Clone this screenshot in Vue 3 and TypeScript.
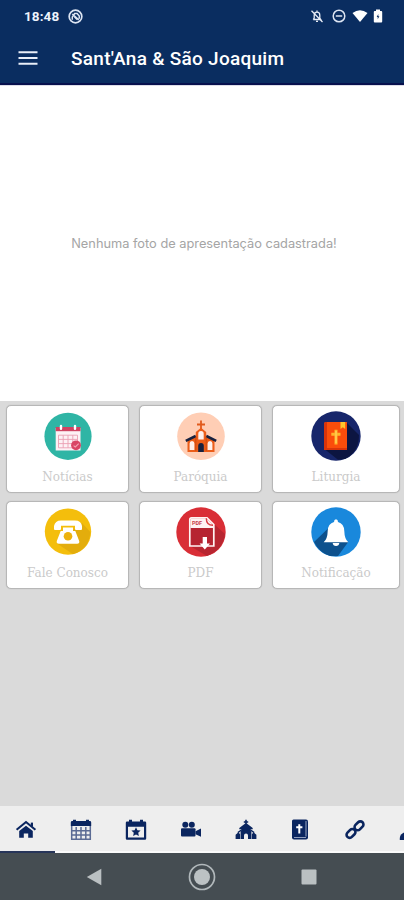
<script setup lang="ts">
interface Shortcut {
  id: string
  label: string
}

const shortcuts: Shortcut[] = [
  { id: 'news', label: 'Notícias' },
  { id: 'parish', label: 'Paróquia' },
  { id: 'liturgy', label: 'Liturgia' },
  { id: 'contact', label: 'Fale Conosco' },
  { id: 'pdf', label: 'PDF' },
  { id: 'notify', label: 'Notificação' },
]

const tabs: string[] = ['home', 'calendar', 'event', 'video', 'church', 'bible', 'link', 'person']
</script>

<template>
  <div class="screen">
    <header class="top">
      <div class="status">
        <span class="clock">18:48</span>
        <svg class="sync" width="15" height="15" viewBox="0 0 14 14" fill="none" stroke="#dce4f2">
          <circle cx="7" cy="7" r="5.9" stroke-width="1.6" />
          <path d="M4 10V7.5L6.2 4.2H8.5L10.5 6.5V9M4 4.8L10 10.2M6 7.3L8.4 9.8" stroke-width="1.4" />
        </svg>
        <div class="status-right">
          <svg width="14" height="14" viewBox="0 0 14 14" fill="none" stroke="#e8edf6" stroke-width="1.3">
            <path d="M3.2 10.5H10.8L9.8 9V6.2C9.8 4.4 8.6 3.2 7 3.2S4.2 4.4 4.2 6.2V9L3.2 10.5M7 1.5V3M6 12.3H8M1.5 1.8L12.5 13" />
          </svg>
          <svg width="14" height="14" viewBox="0 0 14 14" fill="none" stroke="#dce4f2" stroke-width="1.5">
            <circle cx="7" cy="7" r="5.8" /><path d="M3.8 7H10.2" />
          </svg>
          <svg class="wifi" width="16" height="14" viewBox="0 0 16 14" fill="#fff"><path d="M.5 4Q8-1.6 15.5 4L8 13Z" /></svg>
          <svg width="10" height="14" viewBox="0 0 10 14">
            <path d="M3 .5H7V2H8.3Q9.2 2 9.2 3V12.5Q9.2 13.5 8.3 13.5H1.7Q.8 13.5 .8 12.5V3Q.8 2 1.7 2H3Z" fill="#fff" />
            <path d="M5.3 5L3.7 8.1H4.7V10.3L6.4 7.2H5.3Z" fill="#0a2d60" />
          </svg>
        </div>
      </div>
      <div class="bar">
        <svg class="menu" width="20" height="14" viewBox="0 0 20 14" stroke="#e9eef8" stroke-width="1.9"><path d="M.5 1.3H19.5M.5 7H19.5M.5 12.7H19.5" /></svg>
        <h1>Sant'Ana &amp; São Joaquim</h1>
      </div>
    </header>

    <section class="hero"><p>Nenhuma foto de apresentação cadastrada!</p></section>

    <main class="body">
      <div class="grid">
        <button v-for="s in shortcuts" :key="s.id" class="card">
          <svg v-if="s.id === 'news'" width="50" height="50" viewBox="0 0 50 50">
            <circle cx="25" cy="25.3" r="23.6" fill="#2fb5a5" />
            <path d="M12.7 17H37.5V39.5H12.7Z" fill="#fdf1f5" />
            <path d="M12.7 16H37.5V20.2H12.7Z" fill="#cf4362" />
            <path d="M18 15V17.8M32 15V17.8" stroke="#fff" stroke-width="2.4" stroke-linecap="round" />
            <path d="M15.5 24.2H34.5V36.8H15.5ZM15.5 28.4H34.5M15.5 32.6H34.5M20.2 24.2V36.8M25 24.2V36.8M29.8 24.2V36.8" fill="none" stroke="#eb9fb3" stroke-width=".9" />
            <circle cx="33" cy="34.3" r="4.9" fill="#d94565" />
            <path d="M30.6 34.6L32.3 36L35.7 32.6" fill="none" stroke="#f2a2b3" stroke-width="1.1" />
          </svg>
          <svg v-else-if="s.id === 'parish'" width="50" height="50" viewBox="0 0 50 50">
            <circle cx="25" cy="25.3" r="23.8" fill="#ffceb5" />
            <path d="M25 9.5V20M21 13.5H29" stroke="#e15b1d" stroke-width="1.8" />
            <path d="M11.5 29L19.8 25V21L25 16.8L30.2 21V25L38.5 29V41H11.5Z" fill="#ec5d19" />
            <path d="M9.8 29.8L19.7 25M30.3 25L40.2 29.8" stroke="#17213f" stroke-width="2.6" />
            <path d="M22.3 28.5V22.8Q22.3 20 25 20T27.7 22.8V28.5ZM13.6 39V32.5Q13.6 30 16 30T18.4 32.5V39ZM31.6 39V32.5Q31.6 30 34 30T36.4 32.5V39Z" fill="#fff1ec" />
            <path d="M22.2 41V35Q22.2 32 25 32T27.8 35V41Z" fill="#17213f" />
            <path d="M19.8 25.5V40M30.2 25.5V40" stroke="#bd4513" stroke-width=".7" />
          </svg>
          <svg v-else-if="s.id === 'liturgy'" width="50" height="50" viewBox="0 0 50 50">
            <circle cx="25" cy="25" r="24.7" fill="#17266b" />
            <path d="M35.5 11.5L48 24Q48 41 34 48L27 48.8L14 38.5Z" fill="#0c1541" />
            <path d="M15 11H36V39H13V13Q13 11 15 11Z" fill="#fb4d0b" />
            <path d="M13 13Q13 11 15 11H16V37H36V39H13Z" fill="#d9340b" />
            <path d="M29.5 11H34.2V18L31.8 16.3L29.5 18Z" fill="#ffc52c" />
            <path d="M25 18.7V33.5M20.3 23.3H29.5" stroke="#ffb62c" stroke-width="3" />
            <path d="M25 20V32" stroke="#ffda69" stroke-width="1" />
          </svg>
          <svg v-else-if="s.id === 'contact'" width="50" height="50" viewBox="0 0 50 50">
            <circle cx="25" cy="24.6" r="23.2" fill="#f4be0c" />
            <path d="M39 16L47.3 25Q46.3 42 30 47.2L14 36.5Z" fill="#e3ad0c" />
            <path d="M11 22V19Q12 13.4 18 13.4H32Q38.3 13.4 39 19V22Q39 23 38 23H33Q32 23 32 22V18.8H18V22Q18 23 17 23H12Q11 23 11 22Z" fill="#fff" />
            <path d="M20 20.5H30V24H32.3L36.2 34Q36.8 36.8 34.2 36.8H15.8Q13.2 36.8 13.8 34L17.7 24H20Z" fill="#fff" />
            <circle cx="25" cy="29.3" r="4.3" fill="#edb20d" />
          </svg>
          <svg v-else-if="s.id === 'pdf'" width="50" height="50" viewBox="0 0 50 50">
            <circle cx="25" cy="25" r="24.7" fill="#d92e36" />
            <path d="M38 17L49 27Q47 43 31 49L14 39Z" fill="#b82631" />
            <path d="M15.5 10.8H31L37.8 17.7V39H13.8V12.5Q13.8 10.8 15.5 10.8Z" fill="#b62431" stroke="#fff4f3" stroke-width="1.7" />
            <path d="M14.5 11.5H30.5L37 18V21H14.5Z" fill="#fff3f3" />
            <path d="M30.3 11.2Q30.3 18.3 37 18.3" fill="none" stroke="#d93b43" stroke-width="1.4" />
            <text x="16" y="17.6" class="pdf-text">PDF</text>
            <path d="M26.7 30H31V36.5H34L28.8 42.5L23.6 36.5H26.7Z" fill="#fff" />
          </svg>
          <svg v-else width="50" height="50" viewBox="0 0 50 50">
            <circle cx="25" cy="25" r="24.7" fill="#1988dc" />
            <path d="M17.5 21L3 35Q8.5 46 19 49L27 49L37.2 35Z" fill="#0d518d" />
            <path d="M25 12.3Q27 12.3 27 15Q33 16.5 33.3 24Q33.5 32 37.3 35.3H12.7Q16.5 32 16.7 24Q17 16.5 23 15Q23 12.3 25 12.3Z" fill="#fff" />
            <path d="M21.7 36H28.3Q28 39 25 39T21.7 36Z" fill="#fff" />
          </svg>
          <span class="label">{{ s.label }}</span>
        </button>
      </div>
    </main>

    <nav class="tabs">
      <div v-for="t in tabs" :key="t" :class="['tab', { active: t === 'home' }]">
        <svg width="22" height="22" viewBox="0 0 22 22" fill="#0a255f">
          <g v-if="t === 'home'">
            <path d="M4.2 12L11 6.8L17.8 12V18.8H13.2V14.5H8.8V18.8H4.2Z" />
            <path d="M1.6 10.8L11 3L20.4 10.8" fill="none" stroke="#0a255f" stroke-width="2.1" />
            <path d="M15.8 3.6H18V7.5H15.8Z" />
          </g>
          <g v-else-if="t === 'calendar'">
            <path d="M.8 3.4Q.8 2 2.2 2H3V.8H6V2H16V.8H19V2H19.8Q21.2 2 21.2 3.4V7H.8Z" />
            <path d="M1.7 7V20.3H20.3V7M1.7 11.8H20.3M1.7 16H20.3M6.2 8V20.3M11 8V20.3M15.8 8V20.3" fill="none" stroke="#5b6b94" stroke-width="1.5" />
          </g>
          <g v-else-if="t === 'event'">
            <path fill-rule="evenodd" d="M2 2.5H4V.8H7V2.5H15V.8H18V2.5H20Q21.2 2.5 21.2 3.8V19.5Q21.2 20.8 20 20.8H2Q.8 20.8 .8 19.5V3.8Q.8 2.5 2 2.5ZM3 7.8V18.5H19V7.8Z" />
            <path d="M11 8.2L12.4 11.3L15.6 11.6L13.2 13.8L13.9 17.1L11 15.4L8.1 17.1L8.8 13.8L6.4 11.6L9.6 11.3Z" />
          </g>
          <g v-else-if="t === 'video'">
            <circle cx="5.3" cy="5.8" r="3" /><circle cx="11.8" cy="5.8" r="3" />
            <rect x="1" y="9.2" width="14.5" height="8.3" rx="1" /><path d="M15.5 12.3L21 9.5V17.7L15.5 15.2Z" />
          </g>
          <g v-else-if="t === 'church'">
            <path d="M10.2 .8H11.8V2.3H13.2V3.7H11.8V4.5L17.7 9V10.2H4.3V9L10.2 4.5V3.7H8.8V2.3H10.2Z" />
            <path d="M5.6 13L7.5 9.8H14.5L16.4 13V20H13V16.5Q13 14.5 11 14.5T9 16.5V20H5.6Z" />
            <path d="M.6 15.8L3.2 13.5L5.1 15V20H.6ZM16.9 15L18.8 13.5L21.4 15.8V20H16.9Z" />
            <path d="M2.8 13.6L7 10.7H15L19.2 13.6" fill="none" stroke="#0a255f" stroke-width="1.3" />
          </g>
          <g v-else-if="t === 'bible'">
            <path d="M4.5 .6H17Q19 .6 19 2.6V18.6Q19 20.6 17 20.6H5Q3 20.6 3 18.6V2.1Q3 .6 4.5 .6Z" />
            <path d="M17 2V17.5M5 18.5H17" stroke="#8f9dbb" stroke-width="1.1" />
            <path d="M10.3 5.3V14.4M7.2 8.2H13.4" stroke="#fff" stroke-width="2" />
          </g>
          <g v-else-if="t === 'link'" fill="none" stroke="#0a255f" stroke-width="2.6">
            <rect x="-5" y="-3.1" width="10" height="6.2" rx="3.1" transform="translate(7 14.4) rotate(-45)" />
            <rect x="-5" y="-3.1" width="10" height="6.2" rx="3.1" transform="translate(15 6.8) rotate(-45)" />
          </g>
          <g v-else><circle cx="11" cy="6.5" r="4" /><path d="M.8 21V19Q1.5 14 7 13H15Q20.5 14 21.2 19V21Z" /></g>
        </svg>
      </div>
    </nav>

    <footer class="system">
      <svg width="16" height="18" viewBox="0 0 16 18"><path d="M.8 9L15.3 .8V17.2Z" fill="#bac0c2" /></svg>
      <svg width="28" height="28" viewBox="0 0 28 28"><circle cx="14" cy="14" r="12.5" fill="none" stroke="#b1b8bb" stroke-width="1.7" /><circle cx="14" cy="14" r="8" fill="#bcc2c4" /></svg>
      <svg width="16" height="16" viewBox="0 0 16 16"><rect x=".5" y=".5" width="15" height="15" rx="1" fill="#bac0c2" /></svg>
    </footer>
  </div>
</template>

<style>
body { margin: 0; }
</style>

<style scoped>
.screen { width: 404px; height: 900px; display: flex; flex-direction: column; overflow: hidden; background: #dadada; font-family: Roboto, sans-serif; }
.top { box-sizing: border-box; height: 85px; flex: none; background: #0a2d60; border-bottom: 2px solid #07104d; color: #fff; }
.status { height: 32px; display: flex; align-items: center; padding: 0 21px 0 24px; }
.clock { width: 44px; font-size: 13.5px; font-weight: 700; letter-spacing: .1px; color: #eef3fc; }
.status-right { margin-left: auto; display: flex; align-items: center; gap: 8px; }
.wifi { margin: 0 -3px 0 -2px; }
.bar { height: 51px; display: flex; align-items: center; padding-left: 18px; }
.menu { margin-right: 33px; }
h1 { margin: 2px 0 0; font-size: 19px; line-height: 24px; font-weight: 500; letter-spacing: .28px; white-space: nowrap; }
.hero { box-sizing: border-box; height: 316px; flex: none; display: flex; align-items: center; justify-content: center; background: #fff; border-top: 1px solid #dddde8; }
.hero p { margin: 0 0 0 4px; font-family: Inter, sans-serif; font-size: 12.8px; color: #a5a5a5; white-space: nowrap; }
.body { flex: 1; padding: 4px 4px 0 6px; }
.grid { display: grid; grid-template-columns: 123px 123px 128px; grid-template-rows: 88px 88px; column-gap: 10px; row-gap: 8px; }
.card { box-sizing: border-box; display: flex; flex-direction: column; align-items: center; padding: 5px 0 0; border: 1px solid #b7b7b7; border-radius: 5px; background: #fff; box-shadow: 0 0 1px #aaa; }
.card svg { flex: none; }
.label { margin-top: 8px; font-family: "DejaVu Serif", serif; font-size: 12px; line-height: 16px; color: #cacaca; white-space: nowrap; }
.pdf-text { font: 700 5.5px Roboto, sans-serif; fill: #c73d49; }
.tabs { height: 47px; flex: none; display: flex; overflow: hidden; background: #eee; }
.tab { box-sizing: border-box; width: 54.9px; flex: none; display: flex; justify-content: center; align-items: center; padding: 2px 3px 0 0; border-bottom: 2px solid #fafafa; }
.tab.active { border-bottom-color: #273559; }
.system { height: 47px; flex: none; display: flex; align-items: center; background: #454d52; padding-left: 86px; }
.system svg:nth-child(2) { margin-left: 86px; }
.system svg:nth-child(3) { margin-left: 85px; }
</style>
